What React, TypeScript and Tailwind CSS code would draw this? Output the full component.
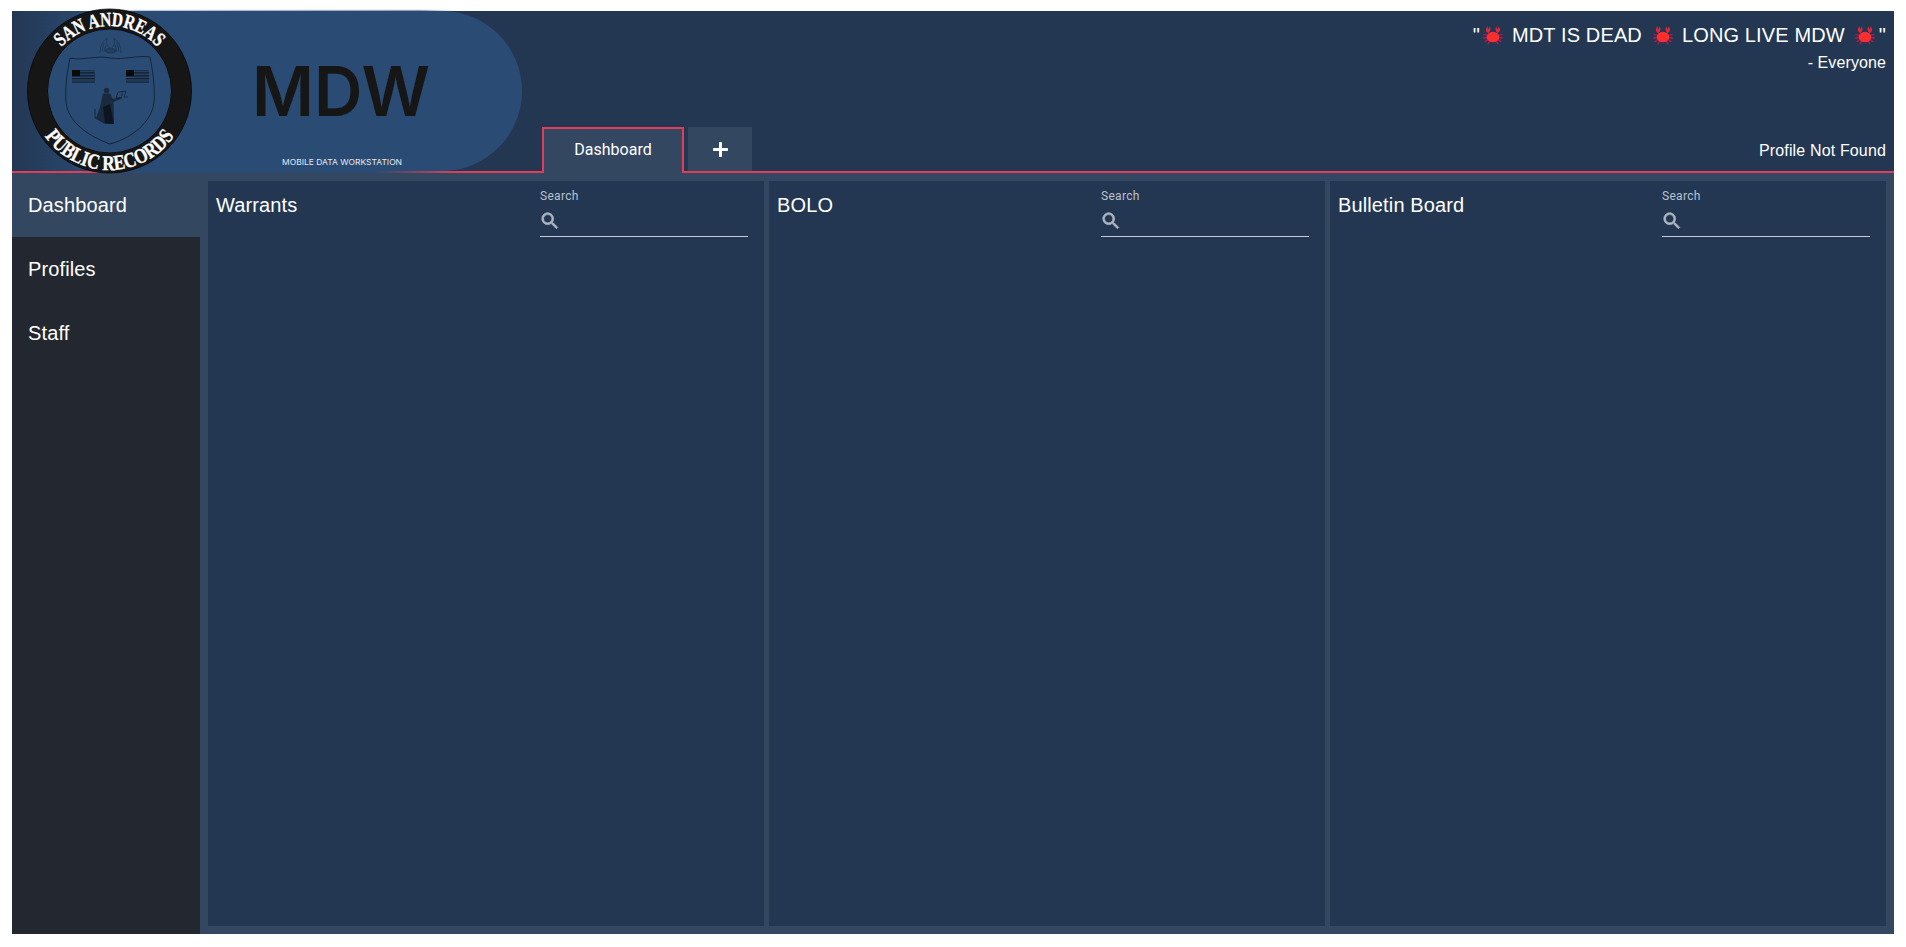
const NAV_ITEMS = ["Dashboard", "Profiles", "Staff"];
const PANELS = ["Warrants", "BOLO", "Bulletin Board"];

function Crab() {
  return (
    <svg viewBox="0 0 20 20" className="w-5 h-5 shrink-0">
      {/* legs */}
      <g stroke="#c2174f" strokeWidth="1.3" strokeLinecap="round" fill="none">
        <path d="M4.5 10.5 L1 9.5" />
        <path d="M4.5 12.5 L0.8 13" />
        <path d="M5.2 14.5 L2 16.5" />
        <path d="M6.8 16 L5 19" />
        <path d="M15.5 10.5 L19 9.5" />
        <path d="M15.5 12.5 L19.2 13" />
        <path d="M14.8 14.5 L18 16.5" />
        <path d="M13.2 16 L15 19" />
      </g>
      {/* claws */}
      <path d="M5.5 8 C2.5 7 2 3.5 4.5 1.2 C4.3 3 5 3.8 6.2 3.8 C6 3 6.2 2.2 6.8 1.6 C8 3.5 7.8 6.5 5.5 8Z" fill="#e0263c" />
      <path d="M14.5 8 C17.5 7 18 3.5 15.5 1.2 C15.7 3 15 3.8 13.8 3.8 C14 3 13.8 2.2 13.2 1.6 C12 3.5 12.2 6.5 14.5 8Z" fill="#e0263c" />
      <ellipse cx="10" cy="12" rx="6.3" ry="5.3" fill="#f92f2f" />
    </svg>
  );
}

function Seal() {
  return (
    <g>
      <circle cx="109.5" cy="91" r="82" fill="#161616" stroke="#05070a" strokeWidth="0.8" />
      <circle cx="109.5" cy="91" r="62" fill="#2a4c74" stroke="#0d0d0d" strokeWidth="1" />
      <path id="sealTop" d="M 44.5 91 A 65 65 0 0 1 174.5 91" fill="none" />
      <path id="sealBottom" d="M 30.5 91 A 79 79 0 0 0 188.5 91" fill="none" />
      <text fontFamily="'Liberation Serif', serif" fontWeight="700" fontSize="20" fill="#ffffff" stroke="#ffffff" strokeWidth="0.4">
        <textPath href="#sealTop" startOffset="50%" textAnchor="middle" textLength="108" lengthAdjust="spacingAndGlyphs">
          SAN ANDREAS
        </textPath>
      </text>
      <text fontFamily="'Liberation Serif', serif" fontWeight="700" fontSize="21" fill="#ffffff" stroke="#ffffff" strokeWidth="0.4">
        <textPath href="#sealBottom" startOffset="50%" textAnchor="middle" textLength="152" lengthAdjust="spacingAndGlyphs">
          PUBLIC RECORDS
        </textPath>
      </text>

      {/* eagle */}
      <g stroke="#14263c" strokeWidth="0.6" fill="none" opacity="0.85">
        <path d="M100 53 C100 46 103 41 107 38 C106 43 107 46 109 47" />
        <path d="M121 53 C121 46 118 41 114 38 C115 43 114 46 112 47" />
        <path d="M102 51 L104 43 M104 52 L106 45 M119 51 L117 43 M117 52 L115 45" />
        <path d="M105 51 C107 47 114 47 116 51 L113 53 L108 53Z" fill="#14263c" fillOpacity="0.4" />
      </g>

      {/* shield */}
      <path
        d="M70 58 C82 61 96 55 110 58 C124 60 138 55 150 57 C153 72 155 88 154 102 C152 122 132 138 110 144 C88 136 68 122 66 102 C65 88 67 72 70 58Z"
        fill="none"
        stroke="#0f1b2a"
        strokeWidth="0.8"
      />

      {/* flags */}
      {[72, 126].map((x) => (
        <g key={x}>
          <rect x={x} y="70" width="8" height="6.5" fill="#0a0a0a" />
          {[70.5, 72, 73.5, 75, 76.5].map((y) => (
            <rect key={y} x={x + 8} y={y} width="15" height="0.7" fill="#101820" />
          ))}
          <rect x={x} y="78" width="23" height="0.8" fill="#101820" />
          <rect x={x} y="79.6" width="23" height="0.8" fill="#14202f" />
          <rect x={x} y="81.2" width="23" height="1.8" fill="#1a2f4a" />
        </g>
      ))}

      {/* justice figure */}
      <g fill="#0e1520">
        <circle cx="106.5" cy="90.5" r="2.7" fill="#1a2a3e" />
        <path d="M103 93.5 L110 93.5 L113 99 L122 96.5 L122 98.5 L113.5 102 L114 124 L105 123.5 L96 118 L100 107Z" fill="#1a2a3e" />
        <path d="M103 107 L110 104 L114 124 L105 123.5Z" />
        <path d="M95 109 L95 118 L105 123.5" fill="none" stroke="#0e1520" strokeWidth="0.7" />
        <path d="M122 91 L122 96 M118 92 L126 91 M118 92 L116 98 L120 98 M126 91 L124 97 L128 97" fill="none" stroke="#0e1520" strokeWidth="0.6" />
      </g>
    </g>
  );
}

function Logo() {
  return (
    <svg
      viewBox="12 9 510 164"
      className="relative z-10 w-[510px] h-[164px] shrink-0 -mt-[2px] -mb-[2px] overflow-visible"
    >
      <defs>
        <linearGradient id="pillFill" gradientUnits="userSpaceOnUse" x1="12" y1="0" x2="522" y2="0">
          <stop offset="0" stopColor="#2a4c74" stopOpacity="0" />
          <stop offset="0.17" stopColor="#2a4c74" />
          <stop offset="1" stopColor="#2a4c74" />
        </linearGradient>
        <linearGradient id="pillTop" gradientUnits="userSpaceOnUse" x1="113" y1="0" x2="455" y2="0">
          <stop offset="0" stopColor="#93a3b5" stopOpacity="0.5" />
          <stop offset="0.9" stopColor="#93a3b5" />
          <stop offset="1" stopColor="#93a3b5" stopOpacity="0" />
        </linearGradient>
        <linearGradient id="pillBottom" gradientUnits="userSpaceOnUse" x1="96" y1="0" x2="455" y2="0">
          <stop offset="0" stopColor="#2a4c74" stopOpacity="0" />
          <stop offset="0.03" stopColor="#2a4c74" />
          <stop offset="0.78" stopColor="#2a4c74" />
          <stop offset="1" stopColor="#2a4c74" stopOpacity="0" />
        </linearGradient>
        <filter id="softText" x="-5%" y="-5%" width="110%" height="110%">
          <feGaussianBlur stdDeviation="0.7" />
        </filter>
      </defs>
      <rect x="113" y="9.8" width="342" height="1.2" fill="url(#pillTop)" />
      <path d="M12 11 H442 A80 80 0 0 1 442 171 H12Z" fill="url(#pillFill)" />
      <rect x="96" y="171" width="359" height="2" fill="url(#pillBottom)" />
      <Seal />
      <text
        x="252"
        y="116"
        fontFamily="Inter, 'Liberation Sans', sans-serif"
        fontWeight="600"
        fontSize="69"
        fill="#181818"
        textLength="178"
        lengthAdjust="spacingAndGlyphs"
        filter="url(#softText)"
      >
        MDW
      </text>
      <text
        x="282"
        y="165"
        fontFamily="Inter, 'Liberation Sans', sans-serif"
        fontWeight="400"
        fontSize="8"
        fill="#e4e8ee"
        textLength="120"
        lengthAdjust="spacingAndGlyphs"
      >
        MOBILE DATA WORKSTATION
      </text>
    </svg>
  );
}

function Header() {
  return (
    <header className="flex h-[162px] shrink-0 bg-[#233753] border-b-2 border-[#e23d58] text-white">
      <Logo />
      <div className="flex flex-1 items-end pl-5 pr-2">
        <div className="flex gap-[4px] -mb-[2px] relative z-10">
          <div className="flex h-[46px] w-[142px] items-center justify-center bg-[#334760] border-2 border-b-0 border-[#e23d58] pb-[2px] font-['Roboto',sans-serif] text-base">
            Dashboard
          </div>
          <div className="flex h-[44px] w-[64px] items-center justify-center bg-[#334760]">
            <svg viewBox="0 0 15 15" className="w-[15px] h-[15px]" fill="#ffffff">
              <rect x="6" y="0" width="3" height="15" rx="0.8" />
              <rect x="0" y="6" width="15" height="3" rx="0.8" />
            </svg>
          </div>
        </div>
        <div className="flex h-full flex-1 flex-col items-end font-['Liberation_Sans',Arial,sans-serif]">
          <div className="flex items-center pt-[12px] h-[36px] text-xl leading-6 tracking-[0.13px]">
            <span>"</span>
            <span className="ml-[3px]"><Crab /></span>
            <span className="ml-[9px]">MDT IS DEAD</span>
            <span className="ml-[11px]"><Crab /></span>
            <span className="ml-[9px]">LONG LIVE MDW</span>
            <span className="ml-[10px]"><Crab /></span>
            <span className="ml-[4px]">"</span>
          </div>
          <div className="text-base leading-[19px] mt-[6px] tracking-[0.1px]">- Everyone</div>
          <div className="mt-auto text-base leading-[19px] pb-[11px] tracking-[0.15px]">Profile Not Found</div>
        </div>
      </div>
    </header>
  );
}

function Sidebar() {
  return (
    <nav className="flex w-[188px] shrink-0 flex-col bg-[#23272f] text-white font-['Liberation_Sans',Arial,sans-serif]">
      {NAV_ITEMS.map((item, i) => (
        <div
          key={item}
          className={`flex h-16 items-center px-4 text-xl tracking-[0.13px] ${i === 0 ? "bg-[#334760]" : ""}`}
        >
          {item}
        </div>
      ))}
    </nav>
  );
}

function Panel({ title }: { title: string }) {
  return (
    <section className="flex min-w-0 flex-1 items-start justify-between bg-[#233753] pl-2 pr-4 pt-2">
      <h2 className="pt-1 text-xl leading-6 tracking-[0.13px] text-white font-['Liberation_Sans',Arial,sans-serif]">{title}</h2>
      <div className="w-[208px] font-['Roboto',sans-serif]">
        <label className="block text-xs leading-[14px] tracking-[0.3px] text-[#b9c1cc]">Search</label>
        <div className="mt-[2px] flex h-[32px] items-center border-b border-[#c8ccd2]">
          <svg viewBox="0 0 24 24" className="w-[22px] h-[22px] -ml-[1px] shrink-0" fill="#aeb6c2" stroke="#aeb6c2" strokeWidth="0.7">
            <path d="M15.5 14h-.79l-.28-.27C15.41 12.59 16 11.11 16 9.5 16 5.91 13.09 3 9.5 3S3 5.91 3 9.5 5.91 16 9.5 16c1.61 0 3.09-.59 4.23-1.57l.27.28v.79l5 4.99L20.49 19l-4.99-5zm-6 0C7.01 14 5 11.99 5 9.5S7.01 5 9.5 5 14 7.01 14 9.5 11.99 14 9.5 14z" />
          </svg>
          <input className="min-w-0 flex-1 bg-transparent text-sm text-white outline-none" />
        </div>
      </div>
    </section>
  );
}

export default function App() {
  return (
    <div className="h-screen bg-white px-3 pt-[11px] pb-[13px]">
      <div className="flex h-full flex-col">
        <Header />
        <div className="flex min-h-0 flex-1">
          <Sidebar />
          <main className="flex flex-1 gap-[5px] bg-[#334760] p-2">
            {PANELS.map((title) => (
              <Panel key={title} title={title} />
            ))}
          </main>
        </div>
      </div>
    </div>
  );
}
